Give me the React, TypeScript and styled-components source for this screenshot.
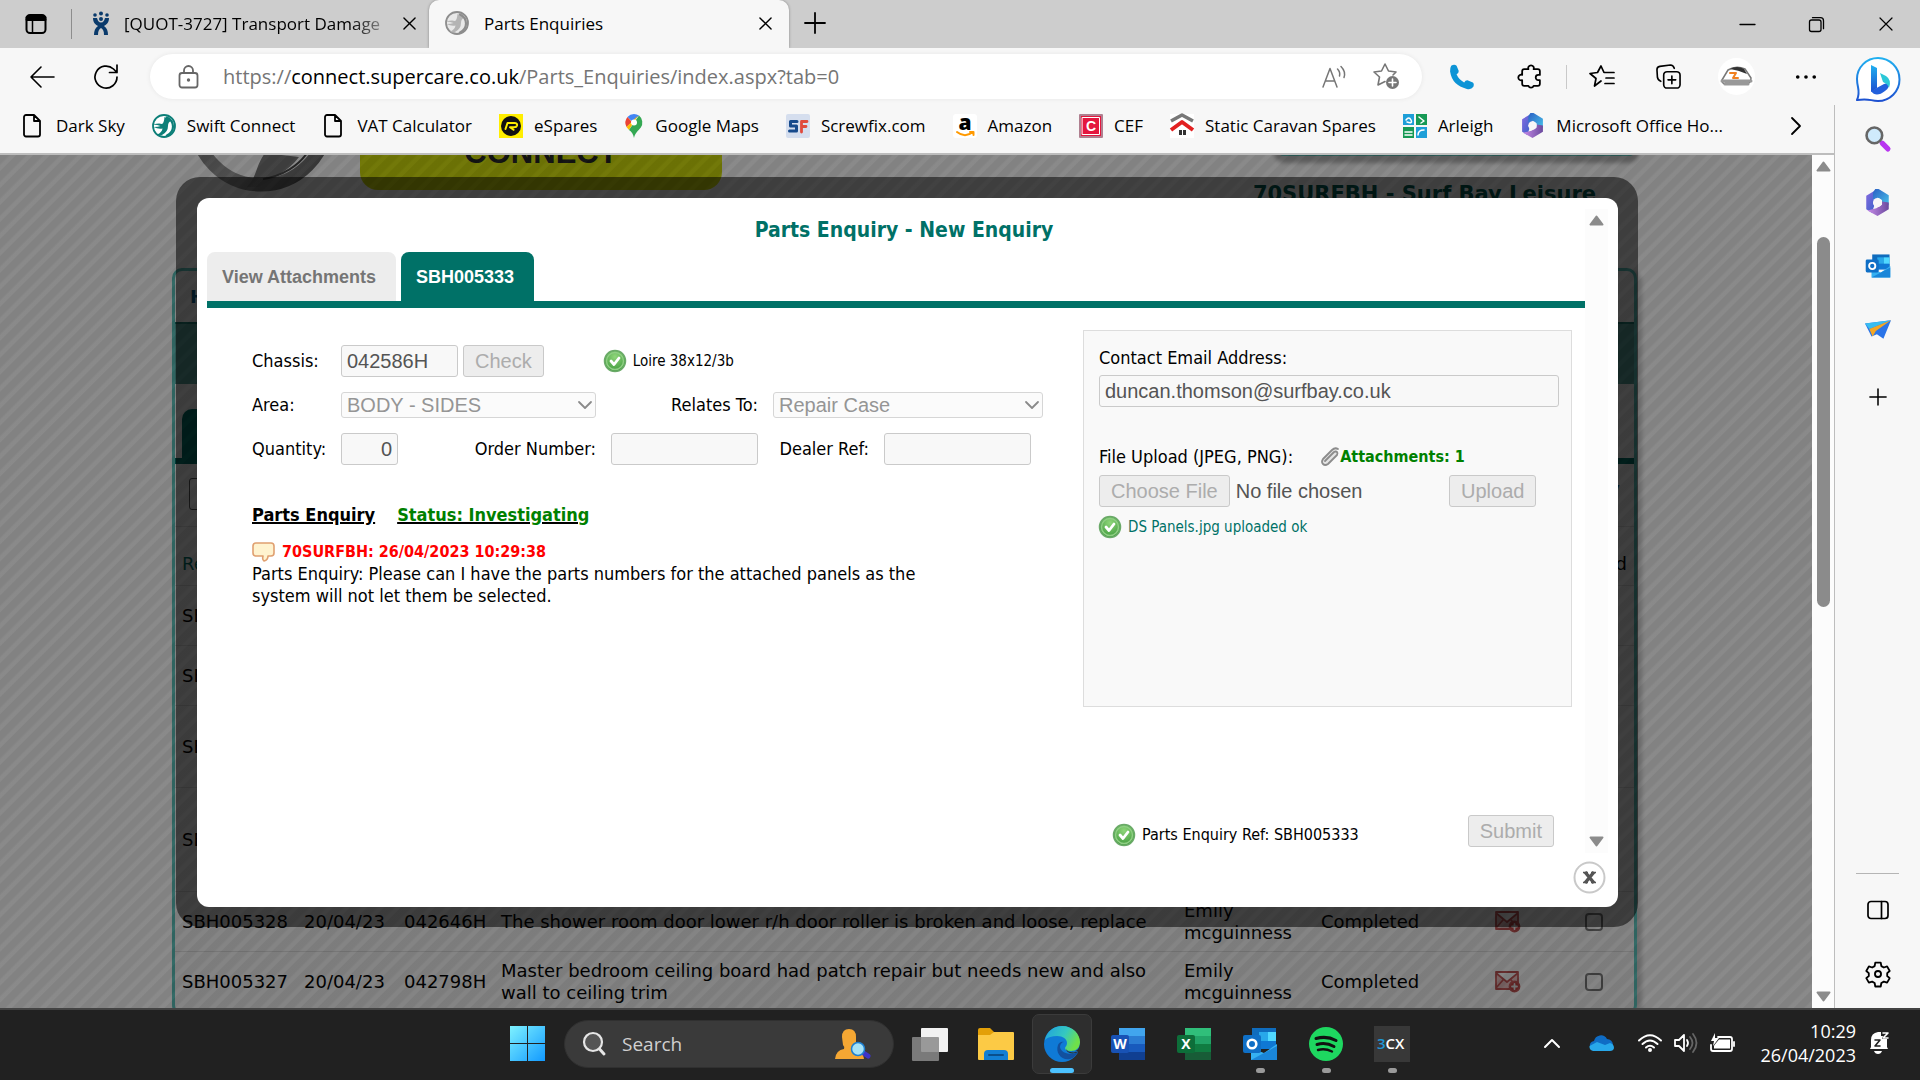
import React from "react";
import styled, { createGlobalStyle, css } from "styled-components";

const chrome = `"Open Sans", "Noto Sans", sans-serif`;
const tahoma = `"DejaVu Sans Condensed", "DejaVu Sans", sans-serif`;
const verdana = `"DejaVu Sans", sans-serif`;
const arial = `"Liberation Sans", Arial, sans-serif`;
const teal = "#007167";

const GlobalStyle = createGlobalStyle`
  *, *::before, *::after { box-sizing: border-box; }
  body { margin: 0; font-family: ${chrome}; color: #000; overflow: hidden; }
  button, input, select { font: inherit; color: inherit; margin: 0; }
  a { color: inherit; text-decoration: none; }
  svg { display: block; flex: none; overflow: visible; }
`;

const Desktop = styled.div`
  display: grid;
  grid-template-rows: 48px minmax(0, 1fr) 72px;
  height: 100vh;
`;

const IconButton = styled.button<{ $w?: number }>`
  display: flex;
  align-items: center;
  justify-content: center;
  flex: none;
  width: ${(p) => p.$w ?? 24}px;
  padding: 0;
  border: 0;
  background: none;
`;

/* ---------- title bar ---------- */

const TitleBar = styled.header`
  display: flex;
  background: #cdcdcd;
`;
const TabActions = styled.div`
  display: flex;
  align-items: center;
  width: 72px;
  height: 30px;
  margin-top: 9px;
  padding-left: 25px;
  border-right: 1px solid #8d8d8d;
`;
const BrowserTab = styled.div<{ $active?: boolean }>`
  display: flex;
  align-items: center;
  height: 48px;
  padding-bottom: 2px;
  font-size: 17px;
  ${(p) =>
    p.$active
      ? css`
          gap: 15px;
          width: 360px;
          padding-left: 16px;
          padding-right: 16px;
          background: #f7f7f7;
          border-radius: 10px 10px 0 0;
          box-shadow: 0 0 3px rgba(0, 0, 0, 0.35);
          clip-path: inset(0 -4px 0 -4px);
        `
      : css`
          gap: 12px;
          width: 357px;
          padding-left: 18px;
          padding-right: 10px;
        `}
`;
const TabTitle = styled.span<{ $fade?: boolean }>`
  flex: 1;
  min-width: 0;
  overflow: hidden;
  white-space: nowrap;
  ${(p) =>
    p.$fade &&
    css`
      mask-image: linear-gradient(90deg, #000 86%, transparent 104%);
    `}
`;
const NewTab = styled(IconButton)`
  margin-left: 14px;
  padding-bottom: 2px;
`;
const WindowControls = styled.div`
  display: flex;
  margin-left: auto;
`;

/* ---------- browser body ---------- */

const Browser = styled.div`
  display: grid;
  grid-template-columns: minmax(0, 1fr) 85px;
  min-height: 0;
  background: #f7f7f7;
`;
const MainColumn = styled.div`
  display: grid;
  grid-template-rows: 57px 48px minmax(0, 1fr);
  min-height: 0;
`;
const Toolbar = styled.div`
  display: flex;
  align-items: center;
  padding-left: 22px;
`;
const AddressBar = styled.div`
  display: flex;
  align-items: center;
  flex: 1;
  height: 45px;
  padding: 0 20px 0 28px;
  gap: 24px;
  border-radius: 23px;
  background: #fff;
  box-shadow: 0 0 5px rgba(0, 0, 0, 0.07);
`;
const Url = styled.a`
  flex: 1;
  font-size: 20px;
  line-height: 24px;
  color: #757575;
  white-space: nowrap;
  b {
    font-weight: 400;
    color: #000;
  }
`;
const Divider = styled.span`
  width: 1px;
  height: 24px;
  margin: 0 3px 0 8px;
  background: #c9c9c9;
`;
const Profile = styled.button`
  width: 37px;
  height: 37px;
  margin: 0 22px 0 16px;
  padding: 0;
  border: 0;
  border-radius: 50%;
  background: #fff;
`;
const Bookmarks = styled.nav`
  display: flex;
  align-items: center;
  gap: 27px;
  padding: 0 26px 7px 21px;
  border-right: 1px solid #bdbdbd;
  white-space: nowrap;
`;
const Bookmark = styled.a`
  display: flex;
  align-items: center;
  gap: 11px;
  font-size: 17px;
`;
const More = styled(IconButton)`
  margin-left: auto;
`;

const ViewRow = styled.div`
  display: grid;
  grid-template-columns: minmax(0, 1fr) 22px;
  min-height: 0;
  border-top: 2px solid #bdbdbd;
  border-right: 1px solid #bdbdbd;
`;
const Viewport = styled.main`
  position: relative;
  overflow: hidden;
  background: #fff;
`;
const ScrollTrack = styled.div`
  display: flex;
  flex-direction: column;
  align-items: center;
  justify-content: space-between;
  padding: 6px 0;
  background: #fcfcfc;
`;
const ScrollThumb = styled.div`
  width: 13px;
  height: 370px;
  margin: 65px 0 auto;
  border-radius: 7px;
  background: #8b8b8b;
`;

const Sidebar = styled.aside`
  display: flex;
  flex-direction: column;
  align-items: center;
  padding: 3px 0 2px;
`;
const SideItem = styled(IconButton)<{ $h?: number }>`
  width: 44px;
  height: ${(p) => p.$h ?? 64}px;
`;
const SideRule = styled.hr`
  width: 43px;
  margin: auto 0 4px;
  border: 0;
  border-top: 1px solid #b5b5b5;
`;

/* ---------- page under the dialog ---------- */

const Page = styled.div`
  margin-top: -60px;
  padding: 0 175px 0 172px;
  font-family: ${verdana};
  font-size: 18px;
  line-height: 22px;
`;
const PageHeader = styled.div`
  display: flex;
  height: 173px;
`;
const Logo = styled.div`
  width: 188px;
  padding-left: 25px;
`;
const ConnectBadge = styled.div`
  display: flex;
  align-items: flex-end;
  justify-content: center;
  width: 362px;
  height: 95px;
  padding-bottom: 21px;
  border-radius: 18px;
  background: #d2de0a;
  font-family: ${arial};
  font-size: 31px;
  font-weight: 700;
  line-height: 32px;
  color: #222;
`;
const Account = styled.div`
  display: flex;
  flex-direction: column;
  align-items: flex-end;
  margin-left: auto;
`;
const AccountBox = styled.div`
  width: 361px;
  height: 61px;
  border: 2px solid #50a8a0;
  border-radius: 8px;
  background: #fff;
  box-shadow: 0 5px 4px 2px rgba(0, 0, 0, 0.3);
`;
const AccountName = styled.div`
  margin-top: 22px;
  padding-right: 41px;
  font-size: 21px;
  font-weight: 700;
  line-height: 32px;
  white-space: nowrap;
  color: #005a50;
`;
const Panel = styled.div`
  border: 3px solid #5cc4bc;
  border-radius: 10px;
  background: #f4f4f4;
  box-shadow: 4px 4px 4px 1px rgba(0, 0, 0, 0.2);
`;
const PageNav = styled.nav`
  height: 53px;
  padding: 15px;
  font-weight: 700;
  color: #0f5f8c;
  border-bottom: 2px solid #1e7a70;
`;
const Banner = styled.div`
  height: 60px;
  background: #58a09a;
`;
const PageTabs = styled.div`
  display: flex;
  height: 80px;
  padding: 25px 0 0 7px;
  border-bottom: 6px solid ${teal};
`;
const PageTab = styled.div`
  width: 120px;
  border-radius: 10px 10px 0 0;
  background: ${teal};
`;
const FilterRow = styled.div`
  display: flex;
  justify-content: space-between;
  height: 62px;
  padding: 14px 14px 0 14px;
  color: #0f5f8c;
`;
const FilterInput = styled.input`
  width: 200px;
  height: 32px;
  border: 1px solid #555;
  border-radius: 3px;
  background: transparent;
`;
const Listing = styled.table`
  width: 100%;
  table-layout: fixed;
  border-collapse: collapse;
`;
const Line = styled.tr<{ $h: number }>`
  height: ${(p) => p.$h}px;
  td,
  th {
    padding: 0 7px;
    border-top: 1px solid #dadada;
    text-align: left;
    vertical-align: middle;
  }
  th {
    padding-top: 16px;
    font-weight: 400;
    color: ${teal};
  }
  th:last-child {
    color: #000;
    text-align: right;
  }
`;
const Centered = styled.div`
  display: flex;
  justify-content: center;
`;
const Tick = styled.input`
  appearance: none;
  width: 18px;
  height: 18px;
  border: 2px solid #767676;
  border-radius: 4px;
`;

/* ---------- dialog ---------- */

const Shade = styled.div`
  position: absolute;
  inset: 0;
  padding: 22px 174px 0 176px;
  background: repeating-linear-gradient(
    135deg,
    rgba(0, 0, 0, 0.49) 0 6px,
    rgba(8, 8, 8, 0.475) 8px 11px,
    rgba(0, 0, 0, 0.49) 12px
  );
`;
const Frame = styled.div`
  padding: 21px 20px 20px 21px;
  border-radius: 24px;
  background: rgba(0, 0, 0, 0.52);
`;
const Dialog = styled.section`
  padding: 11px 10px 14px 10px;
  border-radius: 12px;
  background: #fff;
  font-family: ${tahoma};
  font-size: 18px;
  line-height: 22px;
`;
const DialogScroll = styled.div`
  display: grid;
  grid-template-columns: minmax(0, 1fr) 23px;
  height: 644px;
`;
const DialogTrack = styled(ScrollTrack)`
  padding: 6px 0;
`;
const Title = styled.h1`
  margin: 0;
  padding: 8px 0 8px 16px;
  font-size: 21px;
  line-height: 27px;
  text-align: center;
  color: ${teal};
`;
const TabStrip = styled.div`
  display: flex;
  gap: 5px;
  border-bottom: 7px solid ${teal};
`;
const DialogTab = styled.button<{ $active?: boolean }>`
  height: 49px;
  padding: 0 20px 0 15px;
  border: 0;
  border-radius: 8px 8px 0 0;
  font-family: ${arial};
  font-size: 18px;
  font-weight: 700;
  background: ${(p) => (p.$active ? teal : "#ededed")};
  color: ${(p) => (p.$active ? "#fff" : "#757575")};
`;
const Columns = styled.div`
  display: grid;
  grid-template-columns: minmax(0, 1fr) 489px;
  padding: 22px 13px 0 45px;
`;
const FormRow = styled.div<{ $first?: boolean }>`
  display: flex;
  align-items: center;
  height: 44px;
  margin-top: ${(p) => (p.$first ? 9 : 0)}px;
`;
const Label = styled.label<{ $w?: number }>`
  flex: none;
  width: ${(p) => (p.$w ? p.$w + "px" : "auto")};
`;
const RightLabel = styled(Label)`
  padding-right: 15px;
  text-align: right;
`;
const Field = styled.input<{ $w?: number; $right?: boolean }>`
  width: ${(p) => (p.$w ? p.$w + "px" : "100%")};
  height: 32px;
  padding: 0 5px;
  border: 1px solid #cacaca;
  border-radius: 3px;
  background: #f8f8f8;
  font-family: ${arial};
  font-size: 20px;
  color: #545454;
  text-align: ${(p) => (p.$right ? "right" : "left")};
`;
const SelectWrap = styled.span<{ $w: number }>`
  display: grid;
  align-items: center;
  flex: none;
  width: ${(p) => p.$w}px;
  > * {
    grid-area: 1 / 1;
  }
  > svg {
    justify-self: end;
    margin-right: 4px;
    pointer-events: none;
  }
`;
const Select = styled.select`
  appearance: none;
  width: 100%;
  height: 26px;
  padding: 0 5px;
  border: 1px solid #d6d6d6;
  border-radius: 3px;
  background: #fbfbfb;
  font-family: ${arial};
  font-size: 20px;
  line-height: 24px;
  color: #959595;
  opacity: 1;
`;
const buttonLook = css`
  height: 32px;
  padding: 0 11px;
  border: 1px solid #c9c9c9;
  border-radius: 3px;
  background: #ededed;
  font-family: ${arial};
  font-size: 20px;
  line-height: 28px;
  color: #acacac;
`;
const GreyButton = styled.button<{ $ml?: number }>`
  ${buttonLook}
  margin-left: ${(p) => p.$ml ?? 0}px;
`;
const Note = styled.span<{ $ml?: number; $color?: string }>`
  display: flex;
  align-items: center;
  gap: 7px;
  margin-left: ${(p) => p.$ml ?? 0}px;
  font-size: 15px;
  color: ${(p) => p.$color ?? "#000"};
`;
const StatusRow = styled.div`
  display: flex;
  gap: 22px;
  margin-top: 33px;
  font-weight: 700;
  text-decoration: underline;
  text-decoration-thickness: 2px;
`;
const Status = styled.span`
  color: #008000;
`;
const Stamp = styled.div`
  display: flex;
  align-items: center;
  gap: 7px;
  margin-top: 15px;
  font-size: 16px;
  font-weight: 700;
  color: #f00;
`;
const Message = styled.p`
  width: 680px;
  margin: 0;
`;
const UploadCard = styled.div`
  height: 377px;
  padding: 16px 12px 0 15px;
  border: 1px solid #ddd;
  background: #f9f9f9;
`;
const StackLabel = styled.label`
  display: block;
  margin-bottom: 6px;
`;
const UploadHead = styled.div`
  display: flex;
  align-items: center;
  height: 22px;
  margin: 39px 0 7px;
`;
const Attachments = styled.a`
  display: flex;
  align-items: center;
  margin-left: 27px;
  font-size: 16px;
  font-weight: 700;
  color: #008000;
`;
const UploadRow = styled.div`
  display: flex;
  align-items: center;
  margin-bottom: 9px;
`;
const FileField = styled.input`
  width: 350px;
  font-family: ${arial};
  font-size: 20px;
  line-height: 32px;
  color: #545454;
  &::file-selector-button {
    ${buttonLook}
    margin: 0 6px 0 0;
  }
`;
const SubmitRow = styled.div`
  display: flex;
  align-items: center;
  justify-content: space-between;
  margin-top: 108px;
  padding: 0 18px 0 30px;
`;
const RefNote = styled(Note)`
  font-size: 16px;
  padding-top: 8px;
`;
const DialogFoot = styled.div`
  display: flex;
  justify-content: flex-end;
  height: 40px;
  padding: 8px 2px 0 0;
`;
const CloseDialog = styled.button`
  width: 33px;
  height: 33px;
  padding: 0;
  border: 0;
  background: none;
`;

/* ---------- taskbar ---------- */

const Taskbar = styled.footer`
  display: grid;
  grid-template-columns: 1fr auto 1fr;
  padding-bottom: 2px;
  background: #212121;
  border-top: 2px solid #434343;
  color: #fff;
`;
const Apps = styled.div`
  grid-column: 2;
  display: flex;
  align-items: center;
  gap: 6px;
`;
const TaskButton = styled.button<{ $active?: boolean; $running?: boolean }>`
  position: relative;
  display: flex;
  align-items: center;
  justify-content: center;
  width: 60px;
  height: 60px;
  padding: 0;
  border: 1px solid ${(p) => (p.$active ? "#3b3b3b" : "transparent")};
  border-radius: 7px;
  background: ${(p) => (p.$active ? "#2e2e2e" : "none")};
  &::after {
    content: "";
    display: ${(p) => (p.$active || p.$running ? "block" : "none")};
    position: absolute;
    bottom: 0;
    width: ${(p) => (p.$active ? 24 : 9)}px;
    height: 5px;
    border-radius: 3px;
    background: ${(p) => (p.$active ? "#4cc2ff" : "#9a9a9a")};
  }
`;
const SearchBox = styled.label`
  display: flex;
  align-items: center;
  gap: 16px;
  width: 330px;
  height: 48px;
  padding: 0 22px 0 17px;
  border: 1px solid #303030;
  border-radius: 24px;
  background: #3a3a3a;
`;
const SearchInput = styled.input`
  flex: 1;
  min-width: 0;
  padding: 0;
  border: 0;
  background: none;
  font-size: 19px;
  &::placeholder {
    color: #d0d0d0;
    opacity: 1;
  }
`;
const Tray = styled.div`
  display: flex;
  align-items: center;
  justify-content: flex-end;
  gap: 12px;
  padding: 0 31px 2px 0;
`;
const TrayGap = styled.span<{ $w: number }>`
  width: ${(p) => p.$w}px;
`;
const Clock = styled.time`
  margin-left: 13px;
  font-size: 18px;
  line-height: 24px;
  text-align: right;
`;

/* ---------- drawings ---------- */

type P = { children: React.ReactNode; s?: number; h?: number; vb?: string; c?: string; w?: number; f?: string };
const Ico = ({ children, s = 24, h, vb = "0 0 24 24", c = "#000", w = 1.5, f = "none" }: P) => (
  <svg width={s} height={h ?? s} viewBox={vb} fill={f} stroke={c} strokeWidth={w} strokeLinecap="round" strokeLinejoin="round" aria-hidden="true">
    {children}
  </svg>
);
const Cross = ({ s = 14, w = 1.5 }: { s?: number; w?: number }) => (
  <Ico s={s} vb="0 0 14 14" w={w}><path d="M1 1l12 12M13 1L1 13" /></Ico>
);
const Doc = () => (
  <Ico s={24} w={1.8}><path d="M5 1h8l6 6v13.500a2 2 0 0 1-2 2H5a2 2 0 0 1-2-2V3a2 2 0 0 1 2-2zM13 1v6h6" /></Ico>
);
const Swallow = ({ bg, fg, line }: { bg: string; fg: string; line: string }) => (
  <Ico c="none">
    <circle cx="12" cy="12" r="11" fill={bg} stroke={line} strokeWidth="1.800" />
    <path d="M1 10.500q6-1.500 9-.5 2-1 2.500-7 4 1 6.500 4-3 1-3 5 0 6-6 9-3 1-5-.5 5-2 5.500-6-4 1-9-1.500 5 0 7-1-3-1.500-7.500-1.500z" fill={fg} />
    <path d="M15 3.500q6 3 6 9t-6 9" stroke={line} strokeWidth="2.200" />
  </Ico>
);
const Hexagon = ({ s = 25 }: { s?: number }) => (
  <Ico s={s} c="none">
    <defs>
      <linearGradient id="hx1" x1="0" y1="0" x2="1" y2="1"><stop offset="0" stopColor="#8a6ae0" /><stop offset="1" stopColor="#2f62c8" /></linearGradient>
      <linearGradient id="hx2" x1="0" y1="0" x2="1" y2="1"><stop offset="0" stopColor="#2b5fc4" /><stop offset="1" stopColor="#48c3ea" /></linearGradient>
      <linearGradient id="hx3" x1="0" y1="0" x2="1" y2="0"><stop offset="0" stopColor="#c68be8" /><stop offset="1" stopColor="#6b4a9e" /></linearGradient>
    </defs>
    <path d="M12 0L2 6v12l5 3 2-6-1-3 4-4z" fill="url(#hx1)" />
    <path d="M10 0h3l9 5.500v9l-6-1V10l-4-2.500L8 9V3z" fill="url(#hx2)" />
    <path d="M22 12v6l-10 6-9-5 8-2 5-3v-3z" fill="url(#hx3)" />
    <circle cx="12" cy="12" r="4" fill="#f7f7f7" />
  </Ico>
);
const Good = () => (
  <Ico s={22} vb="0 0 22 22" c="none">
    <defs><radialGradient id="gd" cx=".5" cy=".3" r=".7"><stop offset="0" stopColor="#8fd67a" /><stop offset="1" stopColor="#3f9a3c" /></radialGradient></defs>
    <circle cx="11" cy="11" r="10.500" fill="url(#gd)" stroke="#6aa968" />
    <circle cx="11" cy="11" r="8.500" fill="none" stroke="#8fce84" />
    <path d="M7 11l3 3.500 5-6.500" stroke="#fff" strokeWidth="2.800" />
  </Ico>
);
const Arrow = ({ down }: { down?: boolean }) => (
  <Ico s={15} h={11} vb="0 0 15 11" c="#8b8b8b" f="#8b8b8b" w={2}>
    <path d={down ? "M1.500 1.500h12l-6 8z" : "M1.500 9.500h12l-6-8z"} />
  </Ico>
);
const Mail = () => (
  <Ico s={25} h={21} vb="0 0 25 21" c="#b85050" w={1.800}>
    <path d="M1 1h22v17H1zM1 2l11 9 11-9M1 17l7-8M23 17l-7-8" fill="#dcb4b4" />
    <circle cx="19.500" cy="15.500" r="5" fill="#b84040" /><path d="M19.500 13v5M17 15.500h5" stroke="#ddd" />
  </Ico>
);
const OfficeTile = ({ letter, base, bands }: { letter: string; base: string; bands: string[] }) => (
  <Ico s={36} h={34} vb="0 0 36 34" c="none">
    {bands.map((b, i) => <rect key={b} x="9" y={1 + i * 8} width="26" height="8" fill={b} />)}
    <rect x="1" y="8" width="18" height="18" rx="2" fill={base} />
    <text x="10" y="22" textAnchor="middle" fontFamily={chrome} fontSize="14" fontWeight="700" fill="#fff">{letter}</text>
  </Ico>
);
const OutlookIcon = ({ s = 36 }: { s?: number }) => (
  <Ico s={s} h={s} vb="0 0 36 36" c="none">
    <rect x="10" y="2" width="24" height="20" fill="#0f6cbd" /><rect x="17" y="6" width="9" height="9" fill="#28a8ea" /><rect x="26" y="6" width="8" height="9" fill="#50d9ff" /><rect x="17" y="15" width="17" height="8" fill="#0f78d4" />
    <path d="M35 18v16H9V22l13 5z" fill="#35b1f2" /><path d="M9 34l26-14v14z" fill="#1a86d9" />
    <rect x="1" y="9" width="18" height="18" rx="2" fill="#0f6fc6" />
    <circle cx="10" cy="18" r="4.300" stroke="#fff" strokeWidth="2.600" />
  </Ico>
);

const Bird = () => (
  <svg width="128" height="96" viewBox="0 0 128 96" aria-hidden="true">
    <defs><linearGradient id="ring" x1="0" y1="0" x2="1" y2="1"><stop offset="0" stopColor="#555" /><stop offset=".6" stopColor="#999" /><stop offset="1" stopColor="#555" /></linearGradient></defs>
    <circle cx="64" cy="24" r="66" fill="none" stroke="url(#ring)" strokeWidth="13" />
    <path d="M50 92c10-10 8-20 18-34l34 4C92 76 74 84 62 92z" fill="#777" />
    <path d="M66 84c20-3 36-14 44-26" stroke="#444" strokeWidth="2" fill="none" />
  </svg>
);

const links: [string, React.ReactNode][] = [
  ["Dark Sky", <Doc />],
  ["Swift Connect", <Swallow bg="#fff" fg="#0d7f78" line="#0d7f78" />],
  ["VAT Calculator", <Doc />],
  ["eSpares", <Ico c="none"><rect width="24" height="24" fill="#ffee00" /><circle cx="12" cy="12" r="10" fill="#111" /><path d="M6.500 15l2-6h7q3 0 2.500 2.500-.5 1.800-3 1.800h-4l3.500 2.500" stroke="#ffee00" strokeWidth="2" /></Ico>],
  ["Google Maps", <Ico s={20} h={24} vb="-1 0 20 24" c="none"><path d="M9 0a8.500 8.500 0 0 0-6.500 3l5 5L14 1.500A9 9 0 0 0 9 0z" fill="#4285f4" /><path d="M2.500 3A9 9 0 0 0 1.500 13L7 8z" fill="#ea4335" /><path d="M1.500 13L13 1.500 4 16z" fill="#fbbc04" /><path d="M14 1.500a9 9 0 0 1 1.800 12C13 17 10 19 9 24c-1-4-2-6-5-8z" fill="#34a853" /><circle cx="9" cy="8.500" r="3" fill="#fff" /></Ico>],
  ["Screwfix.com", <Ico c="none"><rect width="24" height="24" rx="2" fill="#d5deee" /><path d="M11 7.500H4.500v4.500h6v5H3.500" stroke="#164a8c" strokeWidth="3" /><path d="M15.500 18V7.500H21M16 12.500h4" stroke="#e04a3c" strokeWidth="2.800" /></Ico>],
  ["Amazon", <Ico c="none"><rect width="24" height="24" rx="3" fill="#fff" /><text x="12" y="16" textAnchor="middle" fontFamily={chrome} fontSize="21" fontWeight="800" fill="#000">a</text><path d="M4 18c5 4 11 4 16 0M17 18h3.500v3" stroke="#ff9900" strokeWidth="2" /></Ico>],
  ["CEF", <Ico c="none"><rect x="1" y="1" width="22" height="22" fill="#e4173e" stroke="#b08090" strokeWidth="2" /><rect x="3.500" y="3.500" width="17" height="17" stroke="#fff" strokeWidth="1" /><text x="12" y="17" textAnchor="middle" fontFamily={arial} fontSize="14" fontWeight="700" fill="#fff">C</text></Ico>],
  ["Static Caravan Spares", <Ico c="none"><rect width="24" height="24" fill="#fff" /><path d="M1 7l11-6 11 6" stroke="#777" strokeWidth="3.500" strokeLinecap="butt" /><path d="M1 16l11-8 11 8" stroke="#e22020" strokeWidth="4" strokeLinecap="butt" /><path d="M10.500 16v5M14.500 16v5" stroke="#333" strokeWidth="3" strokeLinecap="butt" /></Ico>],
  ["Arleigh", <Ico c="none"><rect width="11" height="11" fill="#1e9fd8" /><rect x="13" width="11" height="11" fill="#179a55" /><rect y="13" width="11" height="11" fill="#179a55" /><rect x="13" y="13" width="11" height="11" fill="#1e9fd8" /><path d="M3 6q3-4 5 0t-4 2M16 3l5 4-3 2M2 18h7M2 21h7M15 21q0-5 6-5" stroke="#fff" strokeWidth="1.500" /></Ico>],
  ["Microsoft Office Ho...", <Hexagon />],
];

const lines: { h: number; ref: string; date: string; chassis: string; text: string }[] = [
  { h: 60, ref: "SBH005332", date: "", chassis: "", text: "" },
  { h: 60, ref: "SBH005331", date: "", chassis: "", text: "" },
  { h: 82, ref: "SBH005330", date: "", chassis: "", text: "" },
  { h: 104, ref: "SBH005329", date: "", chassis: "", text: "" },
  { h: 60, ref: "SBH005328", date: "20/04/23", chassis: "042646H", text: "The shower room door lower r/h door roller is broken and loose, replace" },
  { h: 60, ref: "SBH005327", date: "20/04/23", chassis: "042798H", text: "Master bedroom ceiling board had patch repair but needs new and also wall to ceiling trim" },
];

const Chevron = () => <Ico s={14} h={8} vb="0 0 14 8" c="#8a8a8a" w={1.800}><path d="M1 1l6 6 6-6" /></Ico>;

function EnquiryDialog() {
  return (
    <Dialog role="dialog" aria-labelledby="dlg-title">
      <DialogScroll>
        <div>
          <Title id="dlg-title">Parts Enquiry - New Enquiry</Title>
          <TabStrip>
            <DialogTab>View Attachments</DialogTab>
            <DialogTab $active>SBH005333</DialogTab>
          </TabStrip>
          <Columns>
            <form>
              <FormRow $first>
                <Label htmlFor="chassis" $w={89}>Chassis:</Label>
                <Field id="chassis" $w={117} defaultValue="042586H" disabled />
                <GreyButton type="button" disabled $ml={5}>Check</GreyButton>
                <Note $ml={60}><Good />Loire 38x12/3b</Note>
              </FormRow>
              <FormRow>
                <Label htmlFor="area" $w={89}>Area:</Label>
                <SelectWrap $w={255}>
                  <Select id="area" disabled><option>BODY - SIDES</option></Select>
                  <Chevron />
                </SelectWrap>
                <RightLabel htmlFor="relates" $w={177}>Relates To:</RightLabel>
                <SelectWrap $w={270}>
                  <Select id="relates" disabled><option>Repair Case</option></Select>
                  <Chevron />
                </SelectWrap>
              </FormRow>
              <FormRow>
                <Label htmlFor="qty" $w={89}>Quantity:</Label>
                <Field id="qty" $w={57} $right defaultValue="0" disabled />
                <RightLabel htmlFor="order" $w={213}>Order Number:</RightLabel>
                <Field id="order" $w={147} disabled />
                <RightLabel htmlFor="dealer" $w={126}>Dealer Ref:</RightLabel>
                <Field id="dealer" $w={147} disabled />
              </FormRow>
              <StatusRow>
                <span>Parts Enquiry</span>
                <Status>Status: Investigating</Status>
              </StatusRow>
              <Stamp>
                <Ico s={23} h={20} vb="0 0 23 20" c="#e0a070" f="#fff3cf" w={1.600}><path d="M4 1h15q3 0 3 3v7q0 3-3 3h-3q0 4-4 5-2-1-1-5H4q-3 0-3-3V4q0-3 3-3z" /></Ico>
                70SURFBH: 26/04/2023 10:29:38
              </Stamp>
              <Message>Parts Enquiry: Please can I have the parts numbers for the attached panels as the system will not let them be selected.</Message>
            </form>
            <div>
              <UploadCard>
                <StackLabel htmlFor="email">Contact Email Address:</StackLabel>
                <Field id="email" defaultValue="duncan.thomson@surfbay.co.uk" disabled />
                <UploadHead>
                  <label htmlFor="file">File Upload (JPEG, PNG):</label>
                  <Attachments href="#attachments">
                    <Ico s={20} vb="0 0 20 20" c="#8c8c8c" w={1.800}><path d="M5 14l9-9q2-1 3 0t0 3l-9 9q-3 2-5 0t0-5L12 3q3-3 6-1" fill="#e4e4e4" /></Ico>
                    Attachments: 1
                  </Attachments>
                </UploadHead>
                <UploadRow>
                  <FileField id="file" type="file" disabled />
                  <GreyButton type="button" disabled>Upload</GreyButton>
                </UploadRow>
                <Note $color={teal}><Good />DS Panels.jpg uploaded ok</Note>
              </UploadCard>
              <SubmitRow>
                <RefNote><Good />Parts Enquiry Ref: SBH005333</RefNote>
                <GreyButton type="button" disabled>Submit</GreyButton>
              </SubmitRow>
            </div>
          </Columns>
        </div>
        <DialogTrack><Arrow /><Arrow down /></DialogTrack>
      </DialogScroll>
      <DialogFoot>
        <CloseDialog type="button" aria-label="Close">
          <Ico s={33} vb="0 0 33 33" c="#c9c9c9" f="#fff" w={2}><circle cx="16.500" cy="16.500" r="15" /><path d="M12 11l9 11M21 11l-9 11" stroke="#555" strokeWidth="3.500" strokeLinecap="butt" /><path d="M10 11.500h5M18 11.500h5M10 21.500h5M18 21.500h5" stroke="#555" strokeWidth="1.500" strokeLinecap="butt" /></Ico>
        </CloseDialog>
      </DialogFoot>
    </Dialog>
  );
}

function UnderlyingPage() {
  return (
    <Page>
      <PageHeader>
        <Logo><Bird /></Logo>
        <ConnectBadge>CONNECT</ConnectBadge>
        <Account>
          <AccountBox />
          <AccountName>70SURFBH - Surf Bay Leisure</AccountName>
        </Account>
      </PageHeader>
      <Panel>
        <PageNav><a href="#home">Home</a></PageNav>
        <Banner />
        <PageTabs><PageTab /></PageTabs>
        <FilterRow><FilterInput aria-label="Filter" /><a href="#history">History</a></FilterRow>
        <Listing>
          <colgroup>
            <col width="122" /><col width="100" /><col width="97" /><col /><col width="137" /><col width="146" /><col width="94" /><col width="80" />
          </colgroup>
          <thead>
            <Line $h={59}><th>Ref</th><th /><th /><th /><th /><th /><th /><th>Closed</th></Line>
          </thead>
          <tbody>
            {lines.map((l) => (
              <Line key={l.ref} $h={l.h}>
                <td>{l.ref}</td><td>{l.date}</td><td>{l.chassis}</td><td>{l.text}</td>
                <td>{l.text && "Emily mcguinness"}</td><td>{l.text && "Completed"}</td>
                <td><Centered>{l.text && <Mail />}</Centered></td>
                <td><Centered>{l.text && <Tick type="checkbox" aria-label={l.ref} />}</Centered></td>
              </Line>
            ))}
          </tbody>
        </Listing>
      </Panel>
    </Page>
  );
}

export default function App() {
  return (
    <>
      <GlobalStyle />
      <Desktop>
        <TitleBar>
          <TabActions>
            <Ico s={22} vb="0 0 22 22" w={2}><rect x="1.500" y="2" width="19" height="18" rx="3.500" /><path d="M2 4.500h18M2 6.500h18" strokeWidth="3" /><path d="M7.500 7v13" strokeWidth="1.500" /></Ico>
          </TabActions>
          <BrowserTab>
            <Ico s={22} h={24} vb="0 0 22 24" c="none" f="#0a3a6b"><circle cx="11" cy="2.500" r="2" /><circle cx="5" cy="4" r="1.800" /><circle cx="17" cy="4" r="1.800" /><path d="M3 7h4c1 4 3 4.500 4 4.500S14 11 15 7h4c0 5-3 7-5 8 3 2 4 5 4 9h-4c0-4-1-6-3-7-2 1-3 3-3 7H4c0-4 1-7 4-9-2-1-5-3-5-8z" /><circle cx="11" cy="8" r="2" /></Ico>
            <TabTitle $fade>[QUOT-3727] Transport Damage</TabTitle>
            <IconButton $w={20} aria-label="Close tab"><Cross s={13} /></IconButton>
          </BrowserTab>
          <BrowserTab $active>
            <Swallow bg="#e8e8e8" fg="#b4b4b4" line="#8d8d8d" />
            <TabTitle>Parts Enquiries</TabTitle>
            <IconButton $w={16} aria-label="Close tab"><Cross s={13} /></IconButton>
          </BrowserTab>
          <NewTab aria-label="New tab"><Ico s={22} vb="0 0 22 22" w={1.800}><path d="M11 1v20M1 11h20" /></Ico></NewTab>
          <WindowControls>
            <IconButton $w={69} aria-label="Minimise"><Ico s={15} vb="0 0 15 15" w={1.300}><path d="M0 7.500h15" /></Ico></IconButton>
            <IconButton $w={69} aria-label="Restore"><Ico s={15} vb="0 0 15 15" w={1.300}><rect x=".5" y="3" width="11.500" height="11.500" rx="2" /><path d="M3.500 .7h8q3 0 3 3v8" /></Ico></IconButton>
            <IconButton $w={69} aria-label="Close"><Cross s={14} w={1.200} /></IconButton>
          </WindowControls>
        </TitleBar>

        <Browser>
          <MainColumn>
            <Toolbar>
              <IconButton $w={40} aria-label="Back"><Ico s={26} vb="0 0 26 26" w={1.600}><path d="M25 13H2M12 3L2 13l10 10" /></Ico></IconButton>
              <IconButton $w={88} aria-label="Refresh"><Ico s={26} vb="0 0 26 26" w={1.700}><path d="M24 13A11 11 0 1 1 20.500 5L24 8.500M24 1v7.500h-7.500" /></Ico></IconButton>
              <AddressBar>
                <Ico s={21} h={24} vb="0 0 21 24" c="#666" w={1.800}><rect x="1.500" y="8" width="18" height="14.500" rx="2.500" /><path d="M6 8V5.500a4.500 4.500 0 0 1 9 0V8" /><circle cx="10.500" cy="15" r=".8" fill="#666" /></Ico>
                <Url href="#page">https://<b>connect.supercare.co.uk</b>/Parts_Enquiries/index.aspx?tab=0</Url>
                <IconButton aria-label="Read aloud"><Ico c="#767676"><path d="M1 22L8 3.500 15 22M3.500 16h9M15.500 4q3 3 2 7M19 1.500q5 5 3 11" /></Ico></IconButton>
                <IconButton $w={32} aria-label="Add favourite"><Ico s={27} vb="0 0 27 27" c="#767676" w={1.600}><path d="M12 18.500L5 22l1.500-8L1 9l7.500-1L12 1l3.500 7L23 9l-3 3" /><circle cx="19.500" cy="19.500" r="6.500" fill="#767676" stroke="none" /><path d="M19.500 16v7M16 19.500h7" stroke="#fff" /></Ico></IconButton>
              </AddressBar>
              <IconButton $w={80} aria-label="Call"><Ico s={26} c="none"><path d="M2 1.500q3-1.500 5 0l2 5q0 2-2 3 2 5 7 7.500 1-2 3-2l5 2q1.500 1 .5 4-2 3-6 2Q3 20 1 7q0-4 1-5.500z" fill="#0d94d6" /></Ico></IconButton>
              <IconButton $w={56} aria-label="Extensions"><Ico s={25} w={1.700}><path d="M6 5h4a2.700 2.700 0 1 1 5 0h4q2 0 2 2v3.500h-1.500a2.500 2.500 0 0 0 0 5H21V19q0 2-2 2h-4a2.700 2.700 0 0 1-5 0H6q-2 0-2-2v-3.500a2.700 2.700 0 1 1 0-5V7q0-2 2-2z" /></Ico></IconButton>
              <Divider />
              <IconButton $w={64} aria-label="Favourites"><Ico s={26} vb="0 0 26 26" w={1.700}><path d="M12 17l-6.500 5L7 14.500 1 9.500 8.500 8.500 12 2l3 6.500h10M17 14h8M16 19.500h9" /></Ico></IconButton>
              <IconButton $w={68} aria-label="Collections"><Ico s={25} vb="0 0 26 26" w={1.700}><rect x="8" y="8" width="17" height="17" rx="3.500" /><path d="M16.500 12.500v8M12.500 16.500h8M5 18Q2 17 1.500 14L1 6q0-3 3-3.500L15 1q3 0 4 3.500" /></Ico></IconButton>
              <Profile aria-label="Profile"><Ico s={37} vb="0 0 37 37" c="#777"><path d="M4 22l6-10q8-5 17-1l6 9q0 6-6 6H8q-4 0-4-4z" /><path d="M12 11q7-4 14 0l3 5q-9-4-17-5z" fill="#333" stroke="none" /><path d="M4 23h29M7 26h23" stroke="#999" strokeWidth="3" /><path d="M12 15h6l-3 5h5" stroke="#f08020" strokeWidth="2" /></Ico></Profile>
              <IconButton $w={58} aria-label="Menu"><Ico s={22} c="none" f="#000"><circle cx="3" cy="12" r="2" /><circle cx="12" cy="12" r="2" /><circle cx="21" cy="12" r="2" /></Ico></IconButton>
            </Toolbar>
            <Bookmarks>
              {links.map(([name, icon]) => <Bookmark key={name} href="#bookmark">{icon}{name}</Bookmark>)}
              <More aria-label="More bookmarks"><Ico s={10} h={18} vb="0 0 10 18" w={1.800}><path d="M1 1l8 8-8 8" /></Ico></More>
            </Bookmarks>
            <ViewRow>
              <Viewport>
                <UnderlyingPage />
                <Shade><Frame><EnquiryDialog /></Frame></Shade>
              </Viewport>
              <ScrollTrack><Arrow /><ScrollThumb /><Arrow down /></ScrollTrack>
            </ViewRow>
          </MainColumn>
          <Sidebar>
            <SideItem $h={55} aria-label="Bing">
              <Ico s={44} vb="0 0 44 44" c="none">
                <defs><linearGradient id="bg1" x1="0" y1="0" x2="0" y2="1"><stop offset="0" stopColor="#20b0f0" /><stop offset="1" stopColor="#1d50d0" /></linearGradient></defs>
                <path d="M22 1a21 21 0 0 1 0 43c-8 0-8-3-21-1 4-9 0-12 0-21A21 21 0 0 1 22 1z" fill="#fff" stroke="url(#bg1)" strokeWidth="2" />
                <path d="M15 8l6 3v20l-6 4z" fill="url(#bg1)" /><path d="M15 34l13-7q6-2 5 2-1 3-4 5-9 7-14 0z" fill="#2260dc" /><path d="M24 16l6 3q6 4 3 12-1-4-6-6z" fill="#2bc8d8" />
              </Ico>
            </SideItem>
            <SideItem aria-label="Search"><Ico s={25} w={2.500}><path d="M16.500 16.500l5.500 5.500" stroke="#b835f0" strokeWidth="5" /><circle cx="9" cy="9" r="7.500" stroke="#666" fill="#cfeafc" /></Ico></SideItem>
            <SideItem aria-label="Microsoft 365"><Hexagon s={27} /></SideItem>
            <SideItem aria-label="Outlook"><OutlookIcon s={26} /></SideItem>
            <SideItem aria-label="Drop"><Ico s={26} c="none"><path d="M0 6l24-3-7 17-6-4-5 2z" fill="#2a74e8" /><path d="M0 6l24-3L4 11z" fill="#38bdf0" /><path d="M24 3L4 11l3 7 3-5z" fill="#f5a623" /></Ico></SideItem>
            <SideItem $h={70} aria-label="Add"><Ico s={18} vb="0 0 20 20" w={1.700}><path d="M10 1v18M1 10h18" /></Ico></SideItem>
            <SideRule />
            <SideItem aria-label="Toggle sidebar"><Ico s={22} vb="0 0 22 22" w={1.700}><rect x="1" y="2.500" width="20" height="17" rx="3" /><path d="M14.500 2.500v17" /></Ico></SideItem>
            <SideItem aria-label="Settings"><Ico s={26} w={1.700}><path d="M9.500 1.500h5l.6 3.200 2.300 1.300 3-1 2.400 4.200-2.300 2v2.600l2.300 2-2.400 4.200-3-1-2.300 1.300-.6 3.200h-5l-.6-3.200L6.600 19l-3 1-2.400-4.200 2.300-2v-2.600l-2.300-2L3.600 5l3 1 2.300-1.300z" /><circle cx="12" cy="12" r="2.800" /></Ico></SideItem>
          </Sidebar>
        </Browser>

        <Taskbar>
          <Apps>
            <TaskButton aria-label="Start"><Ico s={36} vb="0 0 36 36" c="none"><defs><linearGradient id="win" x1="0" y1="0" x2="36" y2="36" gradientUnits="userSpaceOnUse"><stop offset="0" stopColor="#7ef2ff" /><stop offset="1" stopColor="#0f97ff" /></linearGradient></defs><path d="M0 0h17v17H0zM18 0h17v17H18zM0 18h17v17H0zM18 18h17v17H18z" fill="url(#win)" /></Ico></TaskButton>
            <SearchBox>
              <Ico s={24} c="#e6e6e6" w={2.200}><circle cx="11" cy="10" r="9" fill="#555" /><path d="M17.500 17l4.500 5" strokeWidth="3" /></Ico>
              <SearchInput placeholder="Search" aria-label="Search" />
              <Ico s={36} h={32} vb="0 0 36 32" c="none"><path d="M7 9q0-8 7-8t7 8v6q-2 5 2 6 5 2 6 10H0q1-9 9-10 1-2-1-4z" fill="#f5a733" /><path d="M27 24l6 4" stroke="#3d35c8" strokeWidth="5" /><circle cx="23" cy="21" r="6.500" fill="#a6e3f7" stroke="#1d7fd0" strokeWidth="1.500" /></Ico>
            </SearchBox>
            <TaskButton aria-label="Task view"><Ico s={36} c="none" vb="0 0 36 36"><rect x="9" y="2" width="27" height="24" rx="1" fill="#f2f2f2" /><rect x="0" y="11" width="27" height="24" rx="1" fill="#8a8a8a" fillOpacity=".85" /></Ico></TaskButton>
            <TaskButton aria-label="Files"><Ico s={36} h={34} vb="0 0 36 34" c="none"><path d="M0 3q0-2 2-2h10l4 4v4H0z" fill="#e3a008" /><rect y="5" width="36" height="28" rx="1" fill="#fcca45" /><path d="M0 5v3h12l4-3z" fill="#e3a008" /><path d="M6 33v-6q0-4 4-4h16q4 0 4 4v6z" fill="#127fd4" /><path d="M11 28h14" stroke="#0a4f8c" strokeWidth="2" /></Ico></TaskButton>
            <TaskButton $active aria-label="Edge"><Ico s={36} vb="0 0 36 36" c="none"><defs><linearGradient id="eg" x1="0" y1="0" x2="1" y2=".4"><stop offset="0" stopColor="#1f9fe0" /><stop offset=".6" stopColor="#35c8c0" /><stop offset="1" stopColor="#6fe04a" /></linearGradient></defs><circle cx="18" cy="18" r="18" fill="#0f7ad6" /><path d="M1 14C3 5 10 0 18 0c11 0 18 8 18 16 0 6-4 9-9 9-4 0-6-1-6-3 0-1 2-2 2-5 0-4-4-7-10-7-5 0-9 1-12 4z" fill="url(#eg)" /><path d="M14 19c-3 8 4 16 12 14 4-1 6-4 8-7-8 4-17 1-18-5 0-3 2-5 4-5-3-1-5 1-6 3z" fill="#12509e" /><path d="M36 17v8h-3l-6 1c6 0 9-4 9-9z" fill="#2e2e2e" /><path d="M22 22c0 4 8 6 12 3l3-1v4l-3-2c-6 3-12 1-12-4z" fill="#2e2e2e" /></Ico></TaskButton>
            <TaskButton aria-label="Word"><OfficeTile letter="W" base="#1852b5" bands={["#41a5ee", "#2b7cd3", "#185abd", "#103f91"]} /></TaskButton>
            <TaskButton aria-label="Excel"><OfficeTile letter="X" base="#0d6e39" bands={["#30bf7a", "#21a366", "#107c41", "#185c37"]} /></TaskButton>
            <TaskButton $running aria-label="Outlook"><OutlookIcon /></TaskButton>
            <TaskButton $running aria-label="Spotify"><Ico s={34} vb="0 0 34 34" c="#111" w={3}><circle cx="17" cy="17" r="17" fill="#1ed760" stroke="none" /><path d="M7 11.500q11-3 20 2M8 17.500q9-2.500 17 2" /><path d="M9 23q7-2 14 1.500" strokeWidth="2.400" /></Ico></TaskButton>
            <TaskButton $running aria-label="3CX"><Ico s={36} vb="0 0 36 36" c="none"><rect width="36" height="36" fill="#383838" /><text x="3" y="23" fontFamily={chrome} fontSize="15" fontWeight="600" fill="#1e96d6">3<tspan fill="#fff">CX</tspan></text></Ico></TaskButton>
          </Apps>
          <Tray>
            <Ico s={16} h={10} vb="0 0 16 10" c="#fff" w={2}><path d="M1 9l7-7 7 7" /></Ico>
            <TrayGap $w={5} />
            <Ico s={25} h={17} vb="0 0 25 17" c="none"><path d="M5 6a7 7 0 0 1 13-2 6 6 0 0 1 6 6l-8 2H1Q0 7 5 6z" fill="#0f6cc4" /><path d="M4 16q-4-1-3.500-5L8 7l8 3 5-2q4 1 4 5-.5 3-4 3z" fill="#28a8ea" /></Ico>
            <TrayGap $w={0} />
            <Ico s={24} h={18} vb="0 0 24 18" c="#fff" w={2}><path d="M1 6.500q11-10.500 22 0M4.500 10q7.500-7 15 0M8 13.500q4-3.500 8 0" /><circle cx="12" cy="16" r="1" fill="#fff" /></Ico>
            <Ico s={24} h={20} vb="0 0 24 20" c="#fff" w={1.800}><path d="M1 7h4l5-5v16l-5-5H1zM13 7q2 3 0 6" /><path d="M16 4q5 6 0 12M19 1q7 9 0 18" stroke="#666" /></Ico>
            <Ico s={25} h={20} vb="0 0 25 20" c="#fff" w={1.800}><path d="M8 4h12q2 0 2 2v10q0 2-2 2H3q-2 0-2-2v-4M24 9v4" /><path d="M9 6.500h11v9H4v-3z" fill="#fff" stroke="none" /><path d="M5 0L1 8h3l-1 5 6-8H5z" fill="#fff" stroke="none" /></Ico>
            <Clock>10:29<br />26/04/2023</Clock>
            <Ico s={21} h={24} vb="0 0 21 24" c="none"><path d="M2 18l1-2V9q0-7 7-8h3v4h2l-1 3h5v8l1 2z" fill="#fff" /><path d="M6 20h8q-1 3-4 3t-4-3z" fill="#fff" /><path d="M7 9h5l-5 6h5M15 2h5l-5 5h5" stroke="#212121" strokeWidth="1.600" /><path d="M15 2h5l-5 5h5" stroke="#fff" strokeWidth="1.600" /></Ico>
          </Tray>
        </Taskbar>
      </Desktop>
    </>
  );
}
